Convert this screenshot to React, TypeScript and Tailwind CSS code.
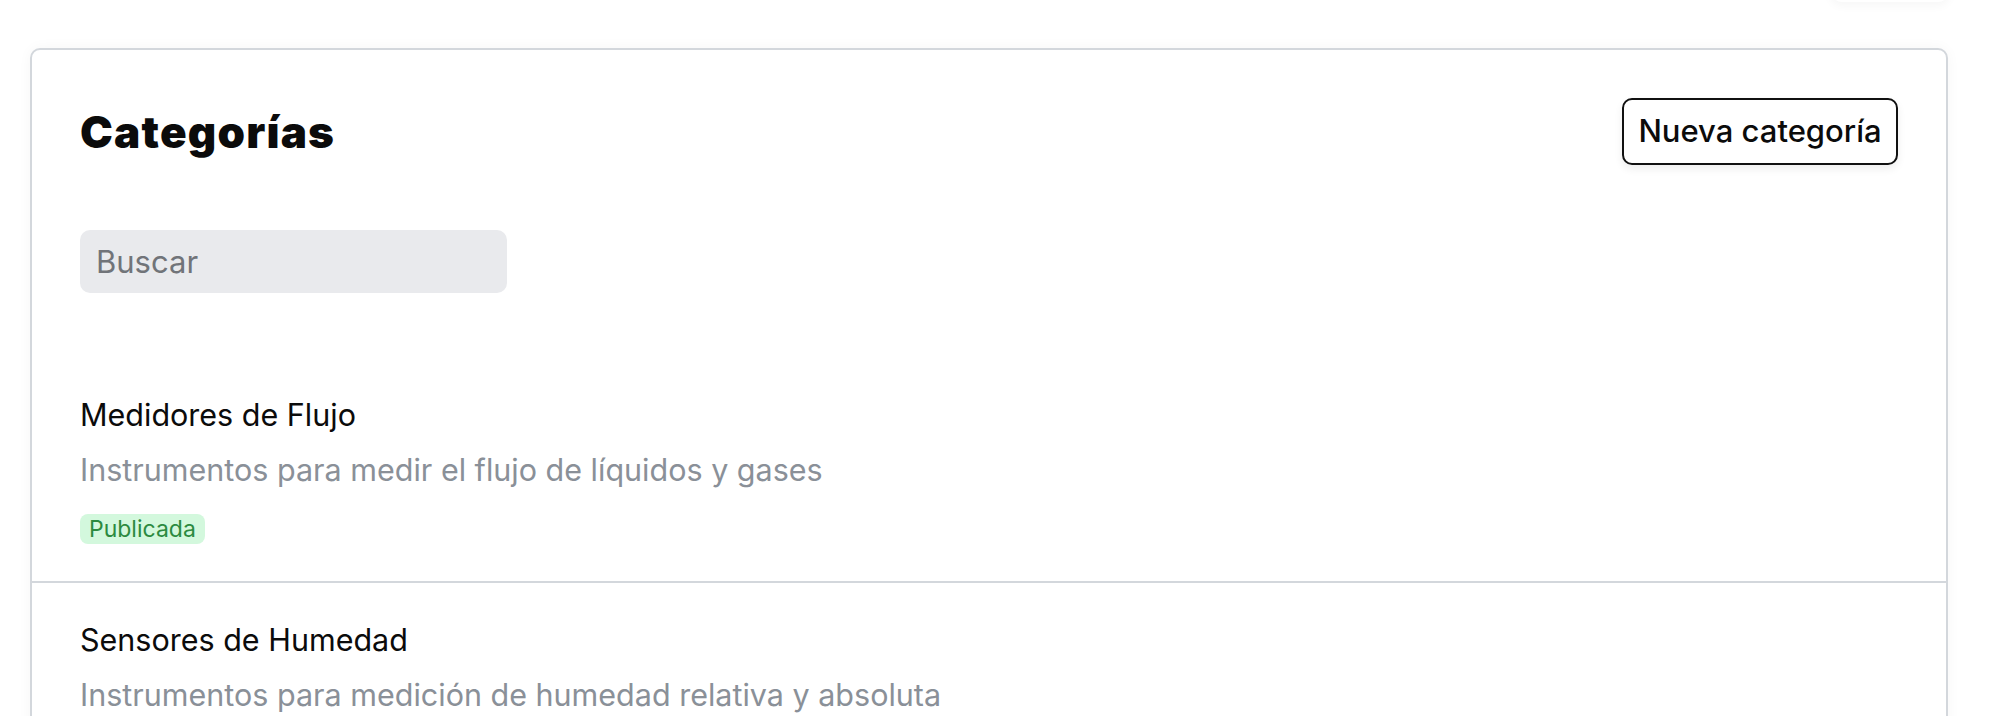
import React from "react";

const categorias = [
  {
    nombre: "Medidores de Flujo",
    descripcion: "Instrumentos para medir el flujo de líquidos y gases",
    publicada: true,
  },
  {
    nombre: "Sensores de Humedad",
    descripcion: "Instrumentos para medición de humedad relativa y absoluta",
    publicada: true,
  },
];

export default function App() {
  return (
    <main className="min-h-screen bg-white pl-[30px] pr-[66px] font-['Inter',sans-serif] text-[#0b0b0b]">
      {/* sombra de la barra superior, fuera de la vista */}
      <div className="h-[48px] flex justify-end">
        <div className="w-[120px] h-[24px] -mt-[22px] mr-[-2px] rounded-full bg-white shadow-[0_4px_10px_rgba(0,0,0,0.035)]" />
      </div>

      <section className="bg-white border-2 border-[#d3d7dc] rounded-[10px] shadow-[0_0_14px_rgba(0,0,0,0.04)] overflow-hidden">
        <header className="flex items-center justify-between px-[48px] pt-[48px]">
          <h1 className="text-[44px] leading-[50px] font-black tracking-[1.2px]">Categorías</h1>
          <button className="w-[276px] h-[67px] flex items-center justify-center border-2 border-[#111] rounded-[10px] bg-white text-[31px] font-medium shadow-[0_4px_8px_rgba(0,0,0,0.07)]">
            Nueva categoría
          </button>
        </header>

        <div className="px-[48px] mt-[65px]">
          <input
            type="text"
            placeholder="Buscar"
            className="w-[427px] h-[63px] rounded-[10px] bg-[#e9eaed] pl-[16px] text-[31px] placeholder:text-[#717479] outline-none"
          />
        </div>

        <ul className="mt-[65px]">
          {categorias.map((c, i) => (
            <li
              key={c.nombre}
              className={
                "px-[48px] pt-[39px] pb-[37px] " +
                (i < categorias.length - 1 ? "border-b-2 border-[#d3d7dc]" : "")
              }
            >
              <p className="text-[30.5px] leading-[36px]">{c.nombre}</p>
              <p className="mt-[19px] text-[30.5px] leading-[36px] text-[#8a9098]">{c.descripcion}</p>
              {c.publicada && (
                <span className="mt-[26px] inline-flex h-[30px] items-center rounded-[8px] bg-[#d3f8dd] px-[9px] text-[23px] text-[#2c8a3f]">
                  Publicada
                </span>
              )}
            </li>
          ))}
        </ul>
      </section>
    </main>
  );
}
